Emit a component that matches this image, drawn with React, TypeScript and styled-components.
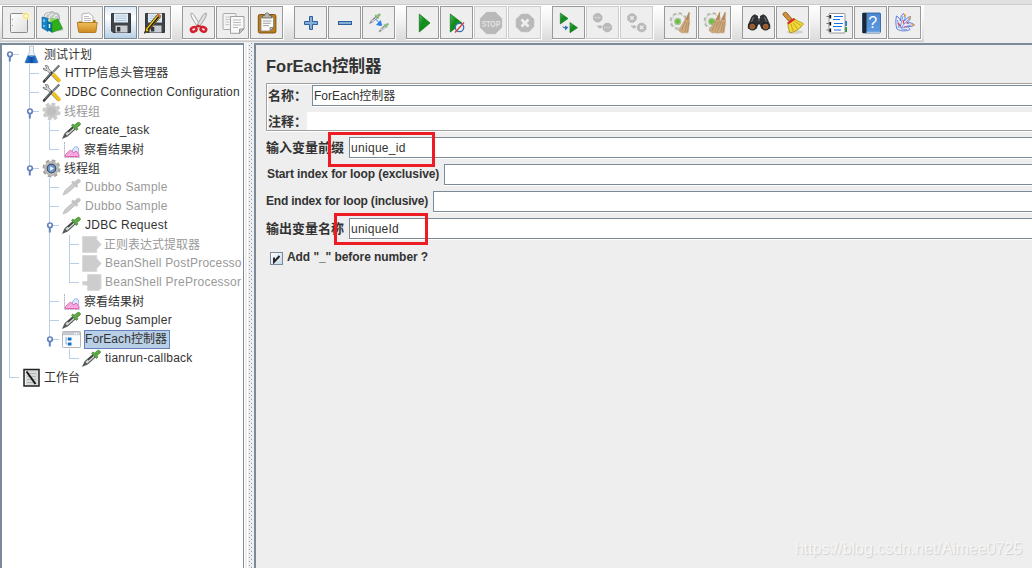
import React from 'react';
import styled, { createGlobalStyle, css } from 'styled-components';

const GlobalStyle = createGlobalStyle`
  * { box-sizing: border-box; }
  html, body { margin: 0; padding: 0; }
  body {
    width: 1032px;
    height: 568px;
    overflow: hidden;
    background: #eeeeee;
    color: #333333;
    font-family: "Liberation Sans", "Noto Sans CJK SC", sans-serif;
    font-size: 12px;
  }
`;

const Window = styled.div`
  display: flex;
  flex-direction: column;
  width: 1032px;
  height: 568px;
  overflow: hidden;
  position: relative;
`;

/* ---------- toolbar ---------- */

const MenuEdge = styled.div`
  flex: none;
  height: 5px;
  background: #e0e0e0;
  border-bottom: 1px solid #cccccc;
`;

const ToolbarStrip = styled.div`
  flex: none;
  height: 38px;
  display: flex;
`;

const Toolbar = styled.div`
  width: 924px;
  height: 37px;
  padding: 1px 0 0 2px;
  display: flex;
  gap: 10px;
  background: linear-gradient(#ffffff, #f4f4f4 40%, #dadada);
  border-bottom: 1px solid #cccccc;
`;

const Group = styled.div`
  display: flex;
  height: 34px;
`;

const ToolButton = styled.button<{ $off?: boolean; $hot?: boolean }>`
  width: 34px;
  height: 34px;
  padding: 0;
  border: 0;
  background: #ffffff;
  display: flex;
  align-items: flex-start;

  & > span {
    width: 33px;
    height: 33px;
    display: flex;
    align-items: center;
    justify-content: center;
    border: 1px solid ${(p) => (p.$off ? '#cccccc' : p.$hot ? '#7a8a99' : '#999999')};
    background: ${(p) => (p.$hot ? 'linear-gradient(#dfe9f3, #ffffff 35%, #b8cfe5)' : '#eeeeee')};
  }

  svg { overflow: visible; }
`;

const Broom = ({ x }: { x: number }) => (
  <g transform={`translate(${x} 0)`}>
    <path d="M11.500 3.500l-4.500 7-6 10 3 2.300h6.500l1.500-10z" fill="#cfab80" stroke="#b58f62" strokeWidth=".5" />
    <path d="M11.300 2l-3.300 7.500 3 1 1.300-8z" fill="#b48a5e" />
    <path d="M8 11l-4 10M9.500 12l-2 10M11 12l-1 10" stroke="#a17d52" strokeWidth=".6" />
  </g>
);

const PaleGear = () => (
  <g>
    <circle cx="10.500" cy="11" r="7.300" fill="none" stroke="#b4b7b4" strokeWidth="3" strokeDasharray="3.200 2.530" />
    <circle cx="10.500" cy="11" r="6.900" fill="#eceeec" stroke="#c3c6c3" strokeWidth=".8" />
    <circle cx="9.700" cy="11.500" r="3" fill="#67bf3a" stroke="#a9c29c" strokeWidth="1.300" />
  </g>
);

const Octagon = ({ x, y, r }: { x: number; y: number; r: number }) => {
  const k = r * 0.42;
  return (
    <path
      d={`M${x - k} ${y - r}H${x + k}L${x + r} ${y - k}V${y + k}L${x + k} ${y + r}H${x - k}L${x - r} ${y + k}V${y - k}Z`}
      fill="#b9b9b9"
      stroke="#b0b0b0"
      strokeWidth=".6"
    />
  );
};

const toolIcons: Record<string, React.ReactNode> = {
  new: (
    <>
      <rect x="4.500" y="3.500" width="17" height="19" rx="1" fill="url(#paper)" stroke="#8b8b8b" />
      <path d="M6 9.500h1M6 15.500h1" stroke="#999" />
      <circle cx="20" cy="6" r="4" fill="#fff9b0" opacity=".75" />
      <circle cx="20" cy="6" r="2.300" fill="#fffde8" stroke="#ecd95a" />
    </>
  ),
  templates: (
    <>
      <path d="M4 8c0-5 3-6 5-5 1-2 5-1.500 6 .200 3-.5 5 1 4.500 6.800z" fill="#c4caca" stroke="#8b9494" strokeWidth=".6" />
      <path d="M5 7c1-3 2-4 4-3.500M9 8c1-3 2-4 4-4M14 8c0-2 2-3 3-3" stroke="#fff" fill="none" />
      <path d="M2 7l6 1.500v13L2 18z" fill="#1784c8" stroke="#0b649f" strokeWidth=".6" />
      <path d="M4 9v3M4 15v2" stroke="#b4e0ff" strokeWidth="1.200" />
      <path d="M17 21.500l7-1.500-3-2z" fill="#999" opacity=".6" />
      <path d="M7 11l5 1.500v10L7 20z" fill="#0a6f9e" />
      <path d="M8.500 12l3-4 6.500 1-4 3z" fill="#80d850" />
      <path d="M12 12l6-3 4.500 9.500-10.500 4z" fill="#2fb018" stroke="#168217" strokeWidth=".6" />
      <path d="M9.500 14v4" stroke="#d5f2ff" strokeWidth="1.500" />
    </>
  ),
  open: (
    <>
      <path d="M4.500 11.500h4l1-1.500h12v8h-17z" fill="#b47412" />
      <path d="M8 14V4l7-1 4 3.500V14z" fill="#fff" stroke="#999" strokeWidth=".7" />
      <path d="M10 6.500h5M10 8.500h7M10 10.500h7" stroke="#aaa" strokeWidth=".8" />
      <path d="M3.300 12.500h19.900l-1.200 9c-.1.800-.500 1-1 1H5.500c-.600 0-1-.300-1-1z" fill="url(#amber)" stroke="#a76c12" strokeWidth=".8" />
    </>
  ),
  save: <use href="#floppy" />,
  saveAs: (
    <>
      <use href="#floppy" />
      <path d="M15.500 4.500l3 2.300L7 20.500 2.500 23.300l1.500-5z" fill="#f6c824" stroke="#3a2d08" strokeWidth=".8" />
      <path d="M16.800 6.500L6 19.800" stroke="#211c12" strokeWidth="1.400" />
      <path d="M16.300 3.500l3 2.300-1.300 1.700-3-2.300z" fill="#d5702c" />
      <path d="M2.500 23.300l.900-2.700 1.500 1.400z" fill="#222" />
    </>
  ),
  cut: (
    <>
      <path d="M5 3.300c2-.800 3.500 2 9.500 13l-2.500 1C8.500 12 4 6 5 3.300z" fill="#f3f3f3" stroke="#8c8c8c" strokeWidth=".8" />
      <path d="M20.300 3.300c-2-.800-3.800 2-9.800 13l2.500 1C16.500 12 21.300 6 20.300 3.300z" fill="#e0e0e0" stroke="#8c8c8c" strokeWidth=".8" />
      <ellipse cx="7.800" cy="19.300" rx="2.900" ry="2.200" transform="rotate(-25 8 19.500)" fill="none" stroke="#d3202c" strokeWidth="2.500" />
      <ellipse cx="17.300" cy="19.300" rx="2.900" ry="2.200" transform="rotate(25 17.300 19.500)" fill="none" stroke="#d3202c" strokeWidth="2.500" />
      <path d="M10 17l2.500-1.500 2.500 1.500" stroke="#d3202c" strokeWidth="1.800" fill="none" />
    </>
  ),
  copy: (
    <>
      <rect x="3" y="3.500" width="13" height="16" rx="1" fill="#f3f3f3" stroke="#a2a2a2" strokeWidth=".9" />
      <path d="M5.500 7h7M5.500 9.500h5M5.500 12h4M5.500 14.500h4" stroke="#bbb" strokeWidth=".8" />
      <path d="M10.500 6.500H24V19l-4.500 4.300h-9z" fill="#f9f9f9" stroke="#969696" strokeWidth=".9" />
      <path d="M24 19h-4.500v4.300z" fill="#ccc" stroke="#888" strokeWidth=".8" />
      <path d="M13 10h8M13 12.500h8M13 15h8M13 17.500h5" stroke="#aaa" strokeWidth=".8" />
    </>
  ),
  paste: (
    <>
      <rect x="4.300" y="4.500" width="17.600" height="18.500" rx="1.500" fill="#bd7d1b" stroke="#794b0b" strokeWidth=".9" />
      <path d="M7 7.500h12.500v10L16 21H7z" fill="#fbfbfb" stroke="#777" strokeWidth=".7" />
      <path d="M19.500 17.500H16V21z" fill="#c8c8c8" stroke="#666" strokeWidth=".7" />
      <path d="M9 11h8.500M9 13.300h7.500M9 15.600h6" stroke="#999" strokeWidth=".9" />
      <path d="M8.500 8V5.500h2C11 2 15 2 15.500 5.500h2V8z" fill="#b4b4a8" stroke="#62625a" strokeWidth=".8" />
    </>
  ),
  plus: <path d="M11.500 6.500h3v5h5v3h-5v5h-3v-5h-5v-3h5z" fill="#84add8" stroke="#2e5f9f" strokeWidth="1" />,
  minus: <rect x="6.500" y="11.500" width="13" height="3" fill="#84add8" stroke="#2e5f9f" />,
  toggle: (
    <>
      <use href="#dropper" transform="translate(3 3) scale(.62)" opacity=".7" />
      <path d="M9.500 9l3 3M15.500 15.500l-4.800-.8 3.800-4z" stroke="#2580ed" fill="#2580ed" strokeWidth="1" />
      <use href="#dropper" transform="translate(12.500 12.500) scale(.55)" opacity=".7" />
    </>
  ),
  start: <path d="M9.300 4v18L20 13z" fill="url(#green)" stroke="#086a10" strokeWidth=".7" />,
  startNow: (
    <>
      <path d="M6.300 4v18L18 13z" fill="url(#green)" stroke="#086a10" strokeWidth=".7" />
      <circle cx="15.500" cy="17.500" r="4.200" fill="#e9f1f7" stroke="#3471ae" strokeWidth="1.300" />
      <path d="M11 22.500l9-10" stroke="#e03836" strokeWidth="1.200" />
    </>
  ),
  stop: (
    <>
      <Octagon x={13} y={13} r={10.7} />
      <text x="13" y="16.500" textAnchor="middle" fontSize="9.500" fontWeight="700" textLength="18.500" lengthAdjust="spacingAndGlyphs" fill="#e2e2e2">
        STOP
      </text>
    </>
  ),
  shutdown: (
    <>
      <Octagon x={13} y={13} r={8.8} />
      <path d="M9.500 9.500l7 7M16.500 9.500l-7 7" stroke="#eee" strokeWidth="2.800" />
    </>
  ),
  remoteStart: (
    <>
      <path d="M4.300 3v11l7.700-5.500z" fill="url(#green)" stroke="#086a10" strokeWidth=".6" />
      <path d="M14 12.500v10.200l7.500-5z" fill="url(#green)" stroke="#086a10" strokeWidth=".6" />
      <path d="M6.500 15.500c0 2 1 3 2.500 3v2l3.500-3-3.500-2v1.500c-1 0-2-.5-2.500-1.500z" fill="#3a72b5" />
    </>
  ),
  remoteStop: (
    <>
      <Octagon x={7.7} y={7.7} r={4.3} />
      <Octagon x={17.3} y={17.5} r={4.3} />
      <path d="M4.500 7.700h6.400M14.100 17.500h6.400" stroke="#d9d9d9" strokeWidth="1.700" strokeDasharray="1 .6" />
      <path d="M7 15c0 2 1 2.500 2.500 2.500v1.800l3-2.500-3-2V16c-1 0-1.500-.3-2.500-1z" fill="#b5b5b5" />
    </>
  ),
  remoteShutdown: (
    <>
      <Octagon x={8} y={8} r={4.3} />
      <Octagon x={17.7} y={17.5} r={4.3} />
      <path d="M6.300 6.300l3.400 3.400m0-3.400L6.300 9.700M16 15.800l3.400 3.400m0-3.400L16 19.200" stroke="#eee" strokeWidth="1.300" />
      <path d="M7 15c0 2 1 2.500 2.500 2.500v1.800l3-2.500-3-2V16c-1 0-1.500-.3-2.500-1z" fill="#b5b5b5" />
    </>
  ),
  clear: (
    <>
      <PaleGear />
      <Broom x={9.5} />
    </>
  ),
  clearAll: (
    <>
      <PaleGear />
      <Broom x={6} />
      <Broom x={11.5} />
    </>
  ),
  search: (
    <>
      <path d="M6 6.500l2.500-1.800 3 1.300v3h3V6l3-1.300L20 6.500l3.800 8.500v3.500h-8L14 14h-2l-1.700 4.500h-8V15z" fill="#303236" stroke="#161616" strokeWidth=".7" />
      <circle cx="6.500" cy="16.300" r="4.200" fill="#26282b" />
      <circle cx="19.500" cy="16.300" r="4.200" fill="#26282b" />
      <circle cx="6.300" cy="16.600" r="2.500" fill="#9d5728" stroke="#b87847" strokeWidth=".6" />
      <circle cx="19.700" cy="16.600" r="2.500" fill="#9d5728" stroke="#b87847" strokeWidth=".6" />
      <path d="M7.500 7l-2 5M18.500 7l2 5M13 8v3" stroke="#777d83" strokeWidth="1" />
    </>
  ),
  resetSearch: (
    <>
      <ellipse cx="15" cy="22" rx="8" ry="1.700" fill="#999" opacity=".35" />
      <path d="M2.800 4.500c.200-2 3-3 4.200-1.500l5 6-3 2.500z" fill="#d0903e" stroke="#855214" strokeWidth=".8" />
      <path d="M8 13l6.500-4.500c4 4 7 3 9 5.500-3 4-7 7.500-13.500 9-.5-3-2.500-5-2-10z" fill="#f1d83a" stroke="#a58a0b" strokeWidth=".8" />
      <path d="M11 14l2 7M13.500 13l4 6M15 11.500l6 4" stroke="#b99c16" strokeWidth=".8" />
      <path d="M7.200 12.500l6.300-4.500 1.700 1.800-7 4.700z" fill="#dd2a20" />
    </>
  ),
  functions: (
    <>
      <rect x="21" y="11" width="2" height="5" fill="#2679d5" />
      <rect x="21" y="17" width="2" height="5" fill="#1d9b34" />
      <rect x="5" y="3.500" width="16" height="19.500" rx="1" fill="#fff" stroke="#8a8a8a" strokeWidth=".9" />
      <path d="M10 6.500h9M9 9.500h7M10 13.500h9M9 16.500h9M10 20h7" stroke="#1670e8" strokeWidth="1.200" />
      <path d="M2.500 6.500h3M2.500 13.500h3M2.500 20h3" stroke="#777" strokeWidth="1" />
      <path d="M6.300 5v3.500M6.300 12v3.500M6.300 18.500V22" stroke="#111" strokeWidth="1.700" />
    </>
  ),
  help: (
    <>
      <rect x="4.500" y="3" width="18" height="20" rx="1" fill="url(#book)" stroke="#275894" strokeWidth=".8" />
      <path d="M4.500 3h4v20h-4z" fill="#1c2733" />
      <path d="M8.500 22.300h14" stroke="#ccd5df" />
      <text x="14.700" y="18.300" textAnchor="middle" fontSize="16" fill="#fff" fontFamily="Liberation Sans, sans-serif">
        ?
      </text>
    </>
  ),
  feather: (
    <>
      <path
        d="M5 19C3.500 15 3.500 10 4.500 6c2 1 3.500 3 4 5 0-3 .5-6 3-7.500 1.500 2 2 4 1 7.500 1.500-2 3.500-4 6-4.500 0 3-1.500 5-4 6.500 3-.8 6 0 8 2-2 1.500-5 2-8 1.500 1.500.5 3 1.500 3.500 3-4 2-9 2-13-.5z"
        fill="#e8edfb"
        stroke="#4f76cf"
        strokeWidth=".9"
      />
      <path d="M7 18L5.500 10M8 18l3-12M9 17.500l8-8.500M9 18l10-3M9 19l6 .5M7 15l3 3" stroke="#5f83dc" strokeWidth=".8" fill="none" />
      <path d="M11 10l1 4M15 12l1.500 2M6 13l2.500 3M12 17l3 0" stroke="#e04668" strokeWidth="1.200" />
      <path d="M12.500 4l1 2.500M18.500 7l-1.500 2M22 15l-2.500-.5" stroke="#f19b31" strokeWidth="1.500" />
    </>
  ),
};

type Tool = { icon: string; off?: boolean; hot?: boolean };

const toolGroups: Tool[][] = [
  [{ icon: 'new' }, { icon: 'templates' }, { icon: 'open' }, { icon: 'save', hot: true }, { icon: 'saveAs' }],
  [{ icon: 'cut' }, { icon: 'copy' }, { icon: 'paste' }],
  [{ icon: 'plus' }, { icon: 'minus' }, { icon: 'toggle' }],
  [{ icon: 'start' }, { icon: 'startNow' }, { icon: 'stop', off: true }, { icon: 'shutdown', off: true }],
  [{ icon: 'remoteStart' }, { icon: 'remoteStop', off: true }, { icon: 'remoteShutdown', off: true }],
  [{ icon: 'clear' }, { icon: 'clearAll' }],
  [{ icon: 'search' }, { icon: 'resetSearch' }],
  [{ icon: 'functions' }, { icon: 'help' }, { icon: 'feather' }],
];

const DefsHolder = styled.svg`
  position: absolute;
`;

/* Gradients and drawings shared by several icons. */
const SharedDefs = () => (
  <DefsHolder width="0" height="0">
    <defs>
      <linearGradient id="paper" x1="0" y1="0" x2="1" y2="1">
        <stop offset="0" stopColor="#fff" />
        <stop offset="1" stopColor="#dedede" />
      </linearGradient>
      <linearGradient id="amber" x1="0" y1="0" x2="0" y2="1">
        <stop offset="0" stopColor="#efbe5a" />
        <stop offset="1" stopColor="#cc8a20" />
      </linearGradient>
      <linearGradient id="green" x1="0" y1="0" x2="1" y2="1">
        <stop offset="0" stopColor="#4fc05c" />
        <stop offset=".4" stopColor="#128a1e" />
        <stop offset="1" stopColor="#12a01a" />
      </linearGradient>
      <linearGradient id="book" x1="0" y1="0" x2="0" y2="1">
        <stop offset="0" stopColor="#4a88d2" />
        <stop offset="1" stopColor="#5c9ae0" />
      </linearGradient>
      <linearGradient id="flask" x1="0" y1="0" x2="1" y2="0">
        <stop offset="0" stopColor="#2f7bd0" />
        <stop offset=".5" stopColor="#0c4fa6" />
        <stop offset="1" stopColor="#3a8ae0" />
      </linearGradient>
      <g id="floppy">
        <path d="M3.500 3.500h19v19H5l-1.500-1.500z" fill="#3f444b" stroke="#2a2d31" strokeWidth=".9" />
        <rect x="6" y="3.500" width="14" height="9" fill="#e3edf7" />
        <path d="M7.500 6h11M7.500 8.300h11M7.500 10.500h11" stroke="#a5bdd6" strokeWidth=".8" />
        <rect x="7.500" y="15.500" width="12" height="7" fill="#c9ccd0" />
        <rect x="9" y="17" width="3.300" height="4.500" fill="#34383d" />
      </g>
      <g id="dropper">
        <path d="M1 17L3 12.500 11 5.500l2.300 2.500L5.500 15z" fill="#d5dad7" stroke="#5c625e" strokeWidth="1.100" />
        <path d="M1 17l2.500-4 1.500 1.500z" fill="#444" />
        <path d="M11 6.500L6 11" stroke="#3d423f" strokeWidth="1.600" />
        <path d="M9.500 4.300l1.300-1.200L12.500 4l3-2.400c1.400-1 3.700.7 2.700 2.300L15 6.500l1 1.500-1.500 1.500z" fill="#5da945" stroke="#44862f" strokeWidth=".7" />
      </g>
      <g id="paleDropper">
        <path d="M1 17L3 12.500 11 5.500l2.300 2.500L5.500 15z" fill="#cccccc" stroke="#c2c2c2" strokeWidth="1" />
        <path d="M9.500 4.300l1.300-1.200L12.500 4l3-2.400c1.400-1 3.700.7 2.700 2.300L15 6.500l1 1.500-1.500 1.500z" fill="#c4c4c4" stroke="#c4c4c4" strokeWidth=".7" />
      </g>
    </defs>
  </DefsHolder>
);

/* ---------- split area ---------- */

const Split = styled.div`
  flex: 1;
  min-height: 0;
  display: flex;
`;

const TreePane = styled.div`
  flex: none;
  width: 244px;
  overflow: hidden;
  background: #ffffff;
  border: solid #7a8a99;
  border-width: 2px 1px 0 2px;
`;

const PaneGap = styled.div`
  flex: none;
  width: 4px;
  background: #eeeeee;
  border: solid #ffffff;
  border-width: 0 1px;
`;

const Divider = styled.div`
  flex: none;
  width: 6px;
  background:
    linear-gradient(#8a97a5 1px, transparent 1px) 1px 2px / 1px 4px repeat-y,
    linear-gradient(#8a97a5 1px, transparent 1px) 3px 4px / 1px 4px repeat-y,
    #eeeeee;
`;

const TreeRow = styled.div`
  display: flex;
  align-items: center;
  height: 19px;
  white-space: nowrap;
`;

type GuideKind = 'none' | 'line' | 'tee' | 'end' | 'tick';

const down = 'linear-gradient(#b8cfe5, #b8cfe5) 7px 0 / 1px 100% no-repeat';
const half = 'linear-gradient(#b8cfe5, #b8cfe5) 7px 0 / 1px 10px no-repeat';
const across = 'linear-gradient(#b8cfe5, #b8cfe5) 7px 9px / 10px 1px no-repeat';
const lower = 'linear-gradient(#b8cfe5, #b8cfe5) 7px 9px / 1px 10px no-repeat';

const guideFill: Record<GuideKind, string> = {
  none: 'none',
  line: down,
  tee: `${down}, ${across}`,
  end: `${half}, ${across}`,
  tick: `${lower}, ${across}`,
};

const Guide = styled.span<{ $kind: GuideKind }>`
  flex: none;
  width: 20px;
  height: 19px;
  background: ${(p) => guideFill[p.$kind]};
`;

const IconSlot = styled.span`
  flex: none;
  width: 20px;
  height: 19px;
  display: flex;

  & > svg { overflow: visible; }
`;

const NodeLabel = styled.span<{ $off?: boolean; $on?: boolean; $track: number; $cjk: boolean }>`
  height: 19px;
  margin-left: ${(p) => (p.$on ? 2 : 1)}px;
  padding: ${(p) => (p.$cjk ? 1 : 0)}px ${(p) => (p.$on ? 2 : 0)}px 0 ${(p) => (p.$on || p.$cjk ? 0 : 1)}px;
  line-height: 17px;
  border: 1px solid transparent;
  letter-spacing: ${(p) => p.$track}px;
  color: ${(p) => (p.$off ? '#999999' : '#333333')};
  ${(p) =>
    p.$on &&
    css`
      background: #b8cfe5;
      border-color: #6382bf;
    `}
`;

const Knob = () => (
  <svg width="20" height="19">
    <path d="M7.800 11.500v5" stroke="#6382bf" strokeWidth="2" />
    <circle cx="8" cy="9.300" r="2.300" fill="#fff" stroke="#6382bf" strokeWidth="1.700" />
  </svg>
);

const nodeIcons: Record<string, React.ReactNode> = {
  flask: (
    <>
      <path d="M7.500 1h4v6l4.500 10c.2.800-.200 1-1 1H4c-.800 0-1.200-.3-1-1L7.500 7z" fill="#eef3f8" stroke="#a8b4c0" strokeWidth=".7" />
      <path d="M5.800 10.500h7.400l2.800 6.300c.2.800-.2 1.200-1 1.200H4c-.800 0-1.200-.3-1-1z" fill="url(#flask)" />
      <path d="M6 10.800l3.500 1 3.700-1" fill="#8ec2f2" />
    </>
  ),
  tools: (
    <>
      <path d="M3.200 1.500c2-.5 4 1 3.500 3.300L16 14.500l1.500 1.800-2 1.200L5 6.500C3 7 1.300 6 1.200 4l2 1.200 1.500-1z" fill="#d7dadb" stroke="#62686b" strokeWidth=".8" />
      <path d="M16.500 1l1.300 1.200-6 6.300-1.300-1.200z" fill="#7b8083" stroke="#4e5254" strokeWidth=".5" />
      <path d="M9.500 9L2 17.500" stroke="#383c3e" strokeWidth="2.600" strokeLinecap="round" />
      <path d="M9 9l-6 7" stroke="#aab0b2" strokeWidth=".7" />
      <path d="M12 11l5 5.500" stroke="#efbf22" strokeWidth="3.600" strokeLinecap="round" />
    </>
  ),
  paleGear: (
    <>
      <circle cx="9.500" cy="9.500" r="7.300" fill="none" stroke="#cbcbcb" strokeWidth="3.600" strokeDasharray="3.400 2.330" />
      <circle cx="9.500" cy="9.500" r="5.300" fill="#c6c6c6" stroke="#cccccc" strokeWidth="3.600" />
      <circle cx="9.500" cy="9.500" r="4.500" fill="#bfbfbf" />
    </>
  ),
  gear: (
    <>
      <circle cx="9.500" cy="9.500" r="7.500" fill="none" stroke="#a3a09c" strokeWidth="3" strokeDasharray="3.500 2.390" />
      <circle cx="9.500" cy="9.500" r="6.300" fill="#e6e5e3" stroke="#bcb9b5" strokeWidth="2.200" />
      <circle cx="9.500" cy="9.500" r="4.300" fill="#6d97cb" stroke="#3b4d68" strokeWidth="1.300" />
      <path d="M8.200 7.300v4.500l3.600-2.300z" fill="#f4f8ff" />
    </>
  ),
  dropper: <use href="#dropper" />,
  paleDropper: <use href="#paleDropper" />,
  chart: (
    <>
      <path d="M2.500 2v15.500H18" stroke="#a99bb2" fill="none" strokeWidth=".8" strokeDasharray="2 .6" />
      <path d="M10 12.500c.5-4 2.500-6 5-5.500 2.500.5 1.500 4 1 7z" stroke="#8aaae2" fill="#dde9fa" />
      <path d="M3.500 16.500V14.500l5-4.500 3 3 2.500-2 3 3.500v2z" fill="#f5a9e0" stroke="#e05aa6" strokeWidth=".9" />
    </>
  ),
  post: <path d="M.5 1.500h14.300v3l4.400 5-4.400 5v3H.5z" fill="#cdcdcd" stroke="#dadada" />,
  pre: <path d="M5.500 1.500H19v14l-2.500 2H5.500V13l-1-1H.8V8.500h3.700l1-1z" fill="#cdcdcd" stroke="#dadada" />,
  controller: (
    <>
      <rect x=".5" y="1.500" width="18" height="16" rx=".8" fill="#fbfcfd" stroke="#b4b8bc" />
      <path d="M1 2h17v3.200H1z" fill="#c5c9cd" />
      <path d="M12 3.700h4.500" stroke="#fff" strokeWidth="1.200" strokeDasharray="1.200 .6" />
      <path d="M4 7v7h2M4 9h2" stroke="#85b0da" fill="none" />
      <rect x="6" y="7.500" width="3.500" height="3" fill="#1670c2" />
      <rect x="6" y="12.500" width="3.500" height="3" fill="#1670c2" />
    </>
  ),
  bench: (
    <>
      <rect x="2" y="1.500" width="15" height="16.500" fill="#d8dad9" stroke="#222" strokeWidth="1.500" />
      <path d="M5 5.500h9M5 8.500h9M5 11.500h9M5 14.500h7" stroke="#a9adab" strokeWidth=".8" />
      <path d="M3.500 3v14" stroke="#fff" strokeDasharray="1.500 1" />
      <path d="M4.500 3.500l9 12.500" stroke="#161616" strokeWidth="2" />
    </>
  ),
};

type TreeNode = {
  label: string;
  icon: string;
  guides: GuideKind[];
  knob?: boolean;
  off?: boolean;
  on?: boolean;
  track?: number;
};

const nodes: TreeNode[] = [
  { label: '测试计划', icon: 'flask', guides: ['tick'], knob: true },
  { label: 'HTTP信息头管理器', icon: 'tools', guides: ['line', 'tee'] },
  { label: 'JDBC Connection Configuration', icon: 'tools', guides: ['line', 'tee'], track: 0.16 },
  { label: '线程组', icon: 'paleGear', guides: ['line', 'tee'], knob: true, off: true },
  { label: 'create_task', icon: 'dropper', guides: ['line', 'line', 'tee'], track: 0.22 },
  { label: '察看结果树', icon: 'chart', guides: ['line', 'line', 'end'] },
  { label: '线程组', icon: 'gear', guides: ['line', 'end'], knob: true },
  { label: 'Dubbo Sample', icon: 'paleDropper', guides: ['line', 'none', 'tee'], off: true, track: 0.28 },
  { label: 'Dubbo Sample', icon: 'paleDropper', guides: ['line', 'none', 'tee'], off: true, track: 0.28 },
  { label: 'JDBC Request', icon: 'dropper', guides: ['line', 'none', 'tee'], knob: true, track: 0.26 },
  { label: '正则表达式提取器', icon: 'post', guides: ['line', 'none', 'line', 'tee'], off: true },
  { label: 'BeanShell PostProcesso', icon: 'post', guides: ['line', 'none', 'line', 'tee'], off: true, track: 0.21 },
  { label: 'BeanShell PreProcessor', icon: 'pre', guides: ['line', 'none', 'line', 'end'], off: true, track: 0.25 },
  { label: '察看结果树', icon: 'chart', guides: ['line', 'none', 'tee'] },
  { label: 'Debug Sampler', icon: 'dropper', guides: ['line', 'none', 'tee'], track: 0.28 },
  { label: 'ForEach控制器', icon: 'controller', guides: ['line', 'none', 'end'], knob: true, on: true, track: 0.08 },
  { label: 'tianrun-callback', icon: 'dropper', guides: ['line', 'none', 'none', 'end'], track: 0.22 },
  { label: '工作台', icon: 'bench', guides: ['end'] },
];

const startsWithHan = (s: string) => s.charCodeAt(0) > 0x2e80;

/* ---------- editor ---------- */

const Editor = styled.div`
  flex: 1;
  min-width: 0;
  border: solid #7a8a99;
  border-width: 2px 0 0 2px;
  background: #eeeeee;
  padding-left: 10px;
`;

const Title = styled.h1`
  margin: 0;
  height: 38px;
  padding-top: 11px;
  font-size: 16.5px;
  font-weight: 700;
  line-height: 20px;
`;

const NameBox = styled.div`
  height: 48px;
  border: solid #a0a0a0;
  border-width: 1px 0 1px 1px;
  box-shadow: inset 1px 1px 0 #ffffff, 0 1px 0 #ffffff;
  padding: 1px 0 0 1px;
  margin-bottom: 6px;
`;

const FieldRow = styled.div<{ $gap?: number; $height?: number }>`
  display: flex;
  height: ${(p) => p.$height ?? 21}px;
  margin-bottom: ${(p) => p.$gap ?? 6}px;
`;

const Caption = styled.label<{ $width: number; $cjk?: boolean; $track?: number; $indent?: number; $line?: number }>`
  flex: none;
  width: ${(p) => p.$width}px;
  padding-left: ${(p) => p.$indent ?? 0}px;
  font-weight: 700;
  font-size: ${(p) => (p.$cjk ? 13 : 12)}px;
  line-height: ${(p) => p.$line ?? 21}px;
  letter-spacing: ${(p) => p.$track ?? 0}px;
  white-space: nowrap;
`;

const Field = styled.div<{ $plain?: boolean; $track?: number }>`
  flex: 1;
  background: #ffffff;
  border: solid #7a8a99;
  border-width: ${(p) => (p.$plain ? '0' : '1px 0 1px 1px')};
  box-shadow: ${(p) => (p.$plain ? 'none' : '0 1px 0 #ffffff')};
  padding-left: 1px;
  line-height: 20px;
  letter-spacing: ${(p) => p.$track ?? 0}px;
`;

const CheckRow = styled.label`
  display: flex;
  align-items: center;
  height: 13px;
  margin: 13px 0 0 4px;
  gap: 4px;
  font-weight: 700;
  line-height: 11px;
  padding-bottom: 0;
  letter-spacing: -0.07px;

  & > b { padding-bottom: 2px; }
`;

const CheckBox = styled.span`
  width: 13px;
  height: 13px;
  border: 1px solid #7a8a99;
  background: linear-gradient(135deg, #ffffff, #c4d8ea);
  display: flex;
`;

const Highlight = styled.div<{ $x: number; $y: number; $w: number; $h: number }>`
  position: absolute;
  left: ${(p) => p.$x}px;
  top: ${(p) => p.$y}px;
  width: ${(p) => p.$w}px;
  height: ${(p) => p.$h}px;
  border: 3px solid #ed1c24;
`;

const Watermark = styled.div`
  position: absolute;
  left: 795px;
  top: 539px;
  font-size: 15.9px;
  line-height: 20px;
  white-space: nowrap;
  color: #f6f6f6;
  text-shadow: 1px 1px 1px #cfcfcf;
`;

export default function App() {
  return (
    <Window>
      <GlobalStyle />
      <SharedDefs />
      <MenuEdge />
      <ToolbarStrip>
        <Toolbar>
          {toolGroups.map((group, i) => (
            <Group key={i}>
              {group.map((tool) => (
                <ToolButton key={tool.icon} $off={tool.off} $hot={tool.hot} aria-label={tool.icon}>
                  <span>
                    <svg width="25" height="25" viewBox="0 0 25 25">
                      {toolIcons[tool.icon]}
                    </svg>
                  </span>
                </ToolButton>
              ))}
            </Group>
          ))}
        </Toolbar>
      </ToolbarStrip>
      <Split>
        <TreePane>
          {nodes.map((node, i) => (
            <TreeRow key={i}>
              {node.guides.map((kind, g) => (
                <Guide key={g} $kind={kind}>
                  {node.knob && g === node.guides.length - 1 && <Knob />}
                </Guide>
              ))}
              <IconSlot>
                <svg width="19" height="19" viewBox="0 0 19 19">
                  {nodeIcons[node.icon]}
                </svg>
              </IconSlot>
              <NodeLabel $off={node.off} $on={node.on} $track={node.track ?? 0} $cjk={startsWithHan(node.label)}>
                {node.label}
              </NodeLabel>
            </TreeRow>
          ))}
        </TreePane>
        <PaneGap />
        <Divider />
        <Editor>
          <Title>ForEach控制器</Title>
          <NameBox>
            <FieldRow>
              <Caption $width={44} $cjk>名称：</Caption>
              <Field>ForEach控制器</Field>
            </FieldRow>
            <FieldRow $height={18} $gap={0}>
              <Caption $width={39} $line={19} $cjk>注释：</Caption>
              <Field $plain />
            </FieldRow>
          </NameBox>
          <FieldRow>
            <Caption $width={83} $cjk>输入变量前缀</Caption>
            <Field $track={0.3}>unique_id</Field>
          </FieldRow>
          <FieldRow>
            <Caption $width={178} $indent={1} $track={-0.1}>Start index for loop (exclusive)</Caption>
            <Field />
          </FieldRow>
          <FieldRow>
            <Caption $width={167} $track={-0.2}>End index for loop (inclusive)</Caption>
            <Field />
          </FieldRow>
          <FieldRow>
            <Caption $width={83} $cjk>输出变量名称</Caption>
            <Field $track={0.25}>uniqueId</Field>
          </FieldRow>
          <CheckRow>
            <CheckBox>
              <svg width="11" height="11">
                <path d="M3 4.500V9l5.500-6" stroke="#222" strokeWidth="1.900" fill="none" />
              </svg>
            </CheckBox>
            <b>Add "_" before number ?</b>
          </CheckRow>
        </Editor>
      </Split>
      <Highlight $x={328} $y={132} $w={107} $h={35} />
      <Highlight $x={334} $y={213} $w={94} $h={32} />
      <Watermark>https://blog.csdn.net/Aimee0725</Watermark>
    </Window>
  );
}
